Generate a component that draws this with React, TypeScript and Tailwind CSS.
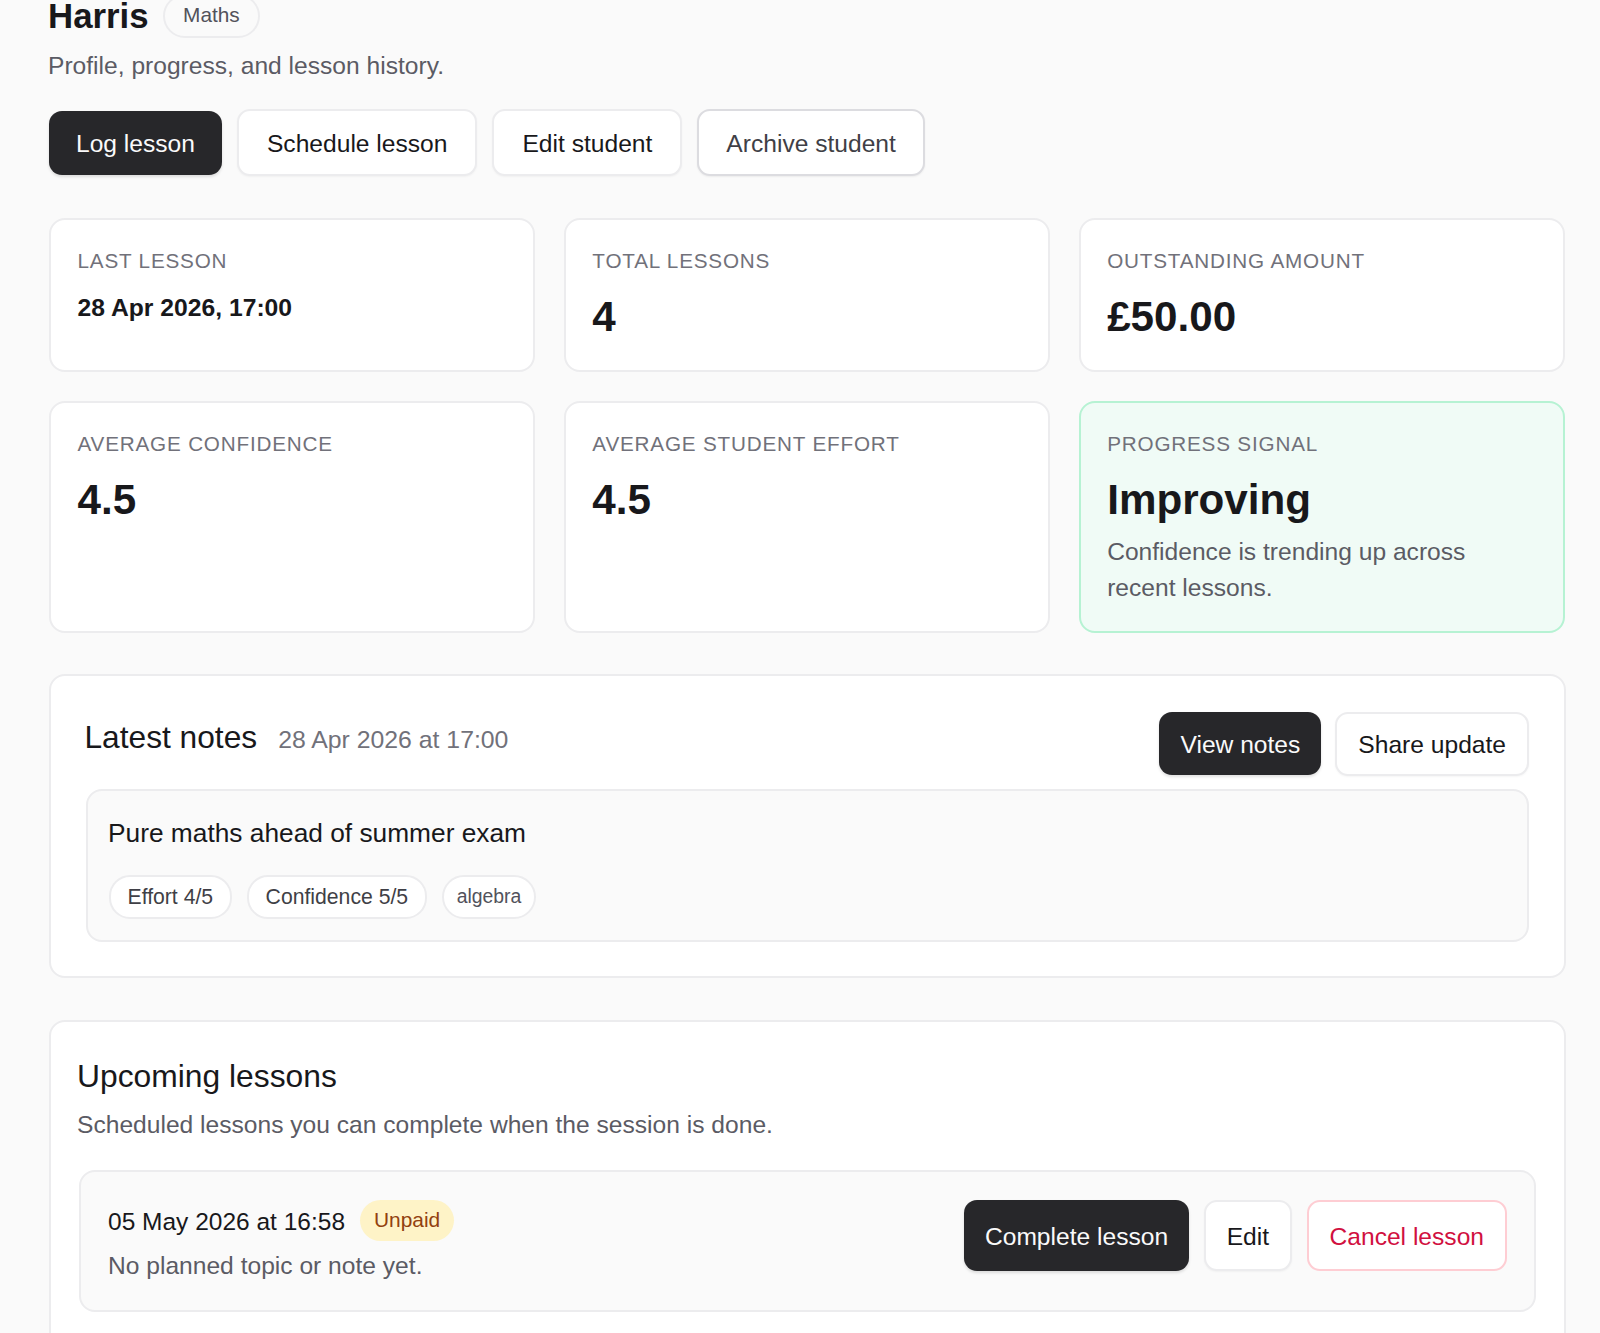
const btnBase = "inline-flex items-center justify-center rounded-[13px] text-[24.6px] leading-[36px] whitespace-nowrap";
const btnDark = `${btnBase} bg-[#27272a] text-[#fafafa] shadow-[0_2px_3px_rgba(0,0,0,0.12)]`;
const btnLight = `${btnBase} bg-white border-2 border-[#ececee] text-[#18181b] shadow-[0_1px_2px_rgba(0,0,0,0.04)]`;
const card = "rounded-[16px] border-2 border-[#ececee] bg-white";
const tag = "inline-flex h-[44px] items-center rounded-[21px] border-2 border-[#ececee] bg-white text-[21.2px] text-[#3f3f46]";
const pill = "inline-flex h-[44px] items-center rounded-full border-2 border-[#ececee] text-[#52525b]";

function Stat({ label, value, small, green, children }: { label: string; value: string; small?: boolean; green?: boolean; children?: React.ReactNode }) {
  return (
    <div className={green ? "rounded-[16px] border-2 border-[#b6f2d3] bg-[#f0fbf6] px-[26.5px] pt-[26px] pb-[25px]" : `${card} px-[26.5px] pt-[26px] pb-[25px]`}>
      <div className="text-[20.7px] leading-[30px] tracking-[0.8px] text-[#71717a]">{label}</div>
      {small ? (
        <div className="mt-[14px] text-[24.7px] leading-[36px] font-bold text-[#18181b]">{value}</div>
      ) : (
        <div className="mt-[15px] text-[42.2px] leading-[52px] font-bold text-[#18181b]">{value}</div>
      )}
      {children}
    </div>
  );
}

export default function App() {
  return (
    <div className="h-[1333px] overflow-hidden bg-[#fafafa] pl-[49px] font-['Liberation_Sans',Arial,sans-serif]">
      <div className="-mt-[6px] -ml-[1px] flex h-[44px] items-center gap-[14.5px]">
        <h1 className="pb-[2px] text-[34.8px] leading-[43px] font-bold text-[#18181b]">Harris</h1>
        <span className={`${pill} bg-[#fafafa] px-[18px] pb-[2px] text-[20.8px]`}>Maths</span>
      </div>
      <p className="mt-[10px] -ml-[1px] text-[24.6px] leading-[36px] text-[#5b5b64]">Profile, progress, and lesson history.</p>

      <div className="mt-[25px] flex items-center gap-[15px]">
        <button className={`${btnDark} h-[64px] px-[27px] pt-[2px]`}>Log lesson</button>
        <button className={`${btnLight} h-[67px] px-[28px] pt-[2px]`}>Schedule lesson</button>
        <button className={`${btnLight} h-[67px] px-[28px] pt-[2px]`}>Edit student</button>
        <button className={`${btnBase} h-[67px] border-2 border-[#dcdce0] bg-white px-[27px] pt-[2px] text-[#3f3f46] shadow-[0_1px_2px_rgba(0,0,0,0.06)]`}>Archive student</button>
      </div>

      <div className="mt-[42px] grid w-[1516px] grid-cols-3 grid-rows-[154px_auto] gap-x-[28.5px] gap-y-[29px]">
        <Stat label="LAST LESSON" value="28 Apr 2026, 17:00" small />
        <Stat label="TOTAL LESSONS" value="4" />
        <Stat label="OUTSTANDING AMOUNT" value="£50.00" />
        <Stat label="AVERAGE CONFIDENCE" value="4.5" />
        <Stat label="AVERAGE STUDENT EFFORT" value="4.5" />
        <Stat label="PROGRESS SIGNAL" value="Improving" green>
          <p className="mt-[8px] text-[24.6px] leading-[36px] text-[#5b5b64]">
            Confidence is trending up across recent lessons.
          </p>
        </Stat>
      </div>

      <section className={`${card} mt-[41px] w-[1517px] pt-[36px] pr-[35px] pb-[34px] pl-[35px]`}>
        <div className="flex items-start justify-between">
          <div className="-ml-[1.5px] flex items-baseline gap-[21px] pt-[3px]">
            <h2 className="text-[31.7px] leading-[44px] text-[#18181b]">Latest notes</h2>
            <span className="text-[24.8px] leading-[36px] text-[#71717a]">28 Apr 2026 at 17:00</span>
          </div>
          <div className="flex gap-[14px]">
            <button className={`${btnDark} h-[63px] px-[21px] pt-[2px]`}>View notes</button>
            <button className={`${btnLight} h-[64px] px-[21px] pt-[2px]`}>Share update</button>
          </div>
        </div>
        <div className="mt-[13px] rounded-[16px] border-2 border-[#ececee] bg-[#fafafa] px-[20px] pt-[23px] pb-[21px]">
          <div className="text-[26.3px] leading-[39px] text-[#18181b]">Pure maths ahead of summer exam</div>
          <div className="mt-[22px] ml-[1px] flex items-center gap-[15px]">
            <span className={`${tag} px-[16.5px]`}>Effort 4/5</span>
            <span className={`${tag} px-[17px]`}>Confidence 5/5</span>
            <span className={`${pill} bg-white px-[12.5px] text-[19.4px]`}>algebra</span>
          </div>
        </div>
      </section>

      <section className={`${card} mt-[42px] w-[1517px] px-[26px] pt-[32px] pb-[36px]`}>
        <h2 className="text-[31.8px] leading-[44px] text-[#18181b]">Upcoming lessons</h2>
        <p className="mt-[9px] text-[24.6px] leading-[36px] text-[#5b5b64]">Scheduled lessons you can complete when the session is done.</p>
        <div className="mx-[2px] mt-[27px] flex items-start justify-between rounded-[16px] border-2 border-[#ececee] bg-[#fafafa] px-[27px] pt-[28px] pb-[26px]">
          <div>
            <div className="flex h-[41px] items-center gap-[15px]">
              <span className="pt-[3px] text-[24.5px] leading-[36px] text-[#18181b]">05 May 2026 at 16:58</span>
              <span className="inline-flex h-[41px] items-center rounded-full bg-[#fef3c7] px-[14px] pb-[2px] text-[20.9px] text-[#92400e]">Unpaid</span>
            </div>
            <p className="mt-[7px] text-[24.6px] leading-[36px] text-[#5b5b64]">No planned topic or note yet.</p>
          </div>
          <div className="flex gap-[14.5px]">
            <button className={`${btnDark} h-[71px] px-[21px] pt-[2px]`}>Complete lesson</button>
            <button className={`${btnLight} h-[71px] px-[21px] pt-[2px]`}>Edit</button>
            <button className={`${btnBase} h-[71px] border-2 border-[#fecdd3] bg-white px-[21px] pt-[2px] text-[#d1103f]`}>Cancel lesson</button>
          </div>
        </div>
      </section>
    </div>
  );
}
